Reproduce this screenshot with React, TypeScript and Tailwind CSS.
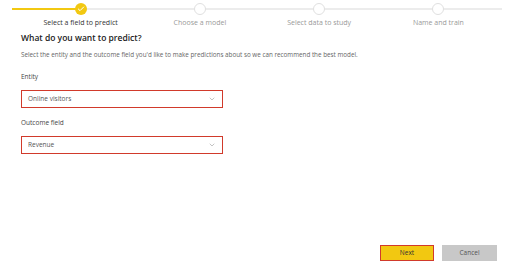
import { ChevronDown, Check } from 'lucide-react';

const steps = [
  'Select a field to predict',
  'Choose a model',
  'Select data to study',
  'Name and train',
];

function Stepper() {
  return (
    <div className="relative pt-[3px]">
      <div className="absolute left-[12px] right-[10px] top-[8px] h-[2px] bg-[#ececec]" />
      <div className="absolute left-[12px] w-[64px] top-[8px] h-[2px] bg-[#f2c811]" />
      <div className="relative grid grid-cols-4 pl-[21px] pr-[14px]">
        {steps.map((s, i) => (
          <div key={s} className="flex flex-col items-center">
            {i === 0 ? (
              <div className="size-[12px] rounded-full bg-[#f2c811] flex items-center justify-center">
                <Check className="size-[8px] text-white" strokeWidth={3} />
              </div>
            ) : (
              <div className="size-[12px] rounded-full bg-white border border-[#e0e0e0]" />
            )}
            <span
              className={
                'mt-[3px] text-[7px] leading-[10px] ' +
                (i === 0 ? 'text-[#333]' : 'text-[#999]')
              }
            >
              {s}
            </span>
          </div>
        ))}
      </div>
    </div>
  );
}

function Select({ value }: { value: string }) {
  return (
    <div className="w-[202px] h-[18px] border-[1.5px] border-[#d13a2b] bg-white flex items-center justify-between pl-[6px] pr-[6px]">
      <span className="text-[6.5px] text-[#555]">{value}</span>
      <ChevronDown className="size-[8px] text-[#888]" strokeWidth={1.5} />
    </div>
  );
}

export default function App() {
  return (
    <div
      className="w-[512px] h-[272px] bg-white relative overflow-hidden"
      style={{ fontFamily: '"Open Sans", "Noto Sans", sans-serif' }}
    >
      <Stepper />
      <div className="pl-[21px] mt-[4px]">
        <h1 className="text-[8.5px] font-semibold text-[#222] leading-[12px]">
          What do you want to predict?
        </h1>
        <p className="mt-[6px] text-[6.3px] text-[#666] leading-[10px]">
          Select the entity and the outcome field you'd like to make predictions about so we can recommend the best model.
        </p>
        <div className="mt-[12px] text-[6.5px] text-[#444] leading-[10px]">Entity</div>
        <div className="mt-[8px]">
          <Select value="Online visitors" />
        </div>
        <div className="mt-[10px] text-[6.5px] text-[#444] leading-[10px]">Outcome field</div>
        <div className="mt-[8px]">
          <Select value="Revenue" />
        </div>
      </div>
      <div className="absolute right-[15px] bottom-[11px] flex gap-[8px]">
        <button className="w-[54px] h-[16px] bg-[#f2c811] border-[1.5px] border-[#d13a2b] text-[6.5px] text-[#333]">
          Next
        </button>
        <button className="w-[55px] h-[16px] bg-[#c8c8c8] text-[6.5px] text-[#555]">
          Cancel
        </button>
      </div>
    </div>
  );
}
